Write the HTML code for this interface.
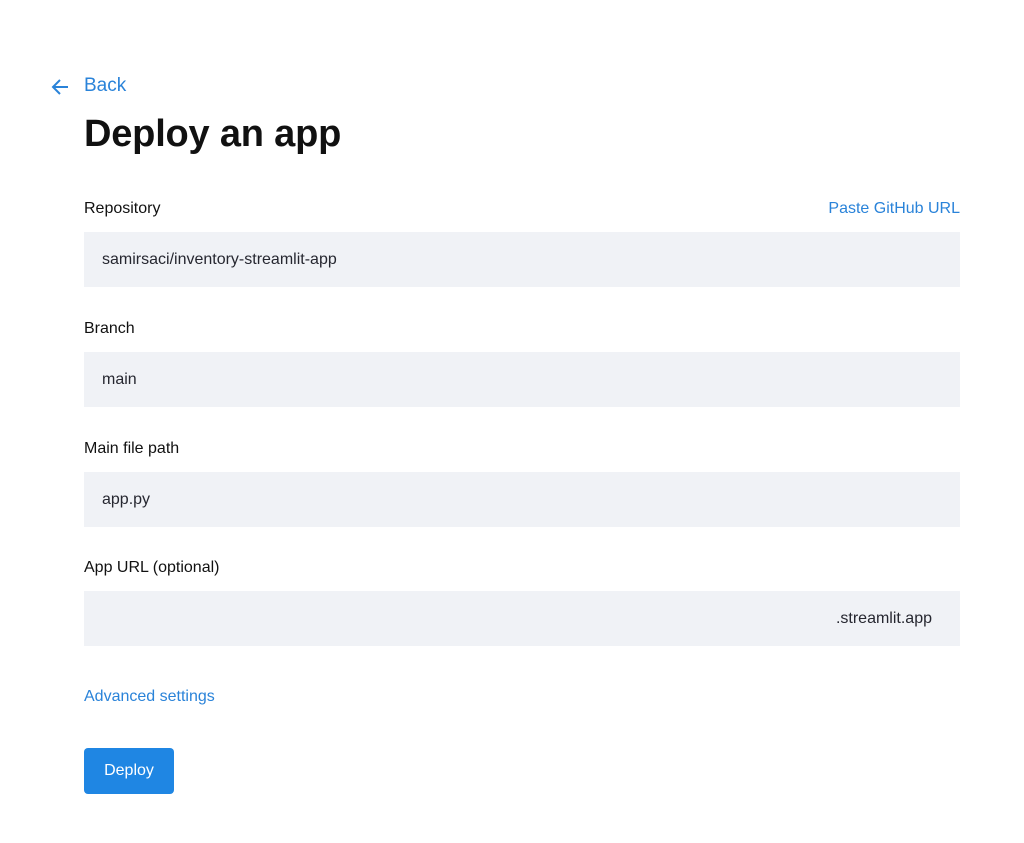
<!DOCTYPE html>
<html><head><style>
body{margin:0;background:#fff;font-family:"Liberation Sans",sans-serif;color:#111;}
.a{position:absolute;}
.lbl{font-size:16px;line-height:20px;left:84px;}
.inp{left:84px;width:876px;height:55px;background:#f0f2f6;}
.inp span{position:absolute;left:18px;top:18px;font-size:16px;line-height:20px;color:#262730;}
.link{color:#2a83d9;font-size:16px;line-height:20px;}
</style></head><body>
<svg class="a" style="left:50px;top:77px" width="20" height="20" viewBox="0 0 20 20"><path d="M18 10H3M10 3L3 10L10 17" stroke="#2a83d9" stroke-width="2" fill="none"/></svg>
<div class="a link" style="left:84px;top:75px;font-size:19px;line-height:22px">Back</div>
<div class="a" style="left:84px;top:111px;font-size:38px;font-weight:bold;line-height:46px;letter-spacing:-0.2px">Deploy an app</div>
<div class="a lbl" style="top:199px">Repository</div>
<div class="a link" style="right:64px;top:199px">Paste GitHub URL</div>
<div class="a inp" style="top:232px"><span>samirsaci/inventory-streamlit-app</span></div>
<div class="a lbl" style="top:319px">Branch</div>
<div class="a inp" style="top:352px"><span>main</span></div>
<div class="a lbl" style="top:439px">Main file path</div>
<div class="a inp" style="top:472px"><span>app.py</span></div>
<div class="a lbl" style="top:558px">App URL (optional)</div>
<div class="a inp" style="top:591px"><span style="left:auto;right:28px">.streamlit.app</span></div>
<div class="a link" style="left:84px;top:687px">Advanced settings</div>
<div class="a" style="left:84px;top:748px;width:90px;height:46px;background:#1f86e3;border-radius:4px;color:#fff;font-size:16px;line-height:46px;text-align:center">Deploy</div>
</body></html>
